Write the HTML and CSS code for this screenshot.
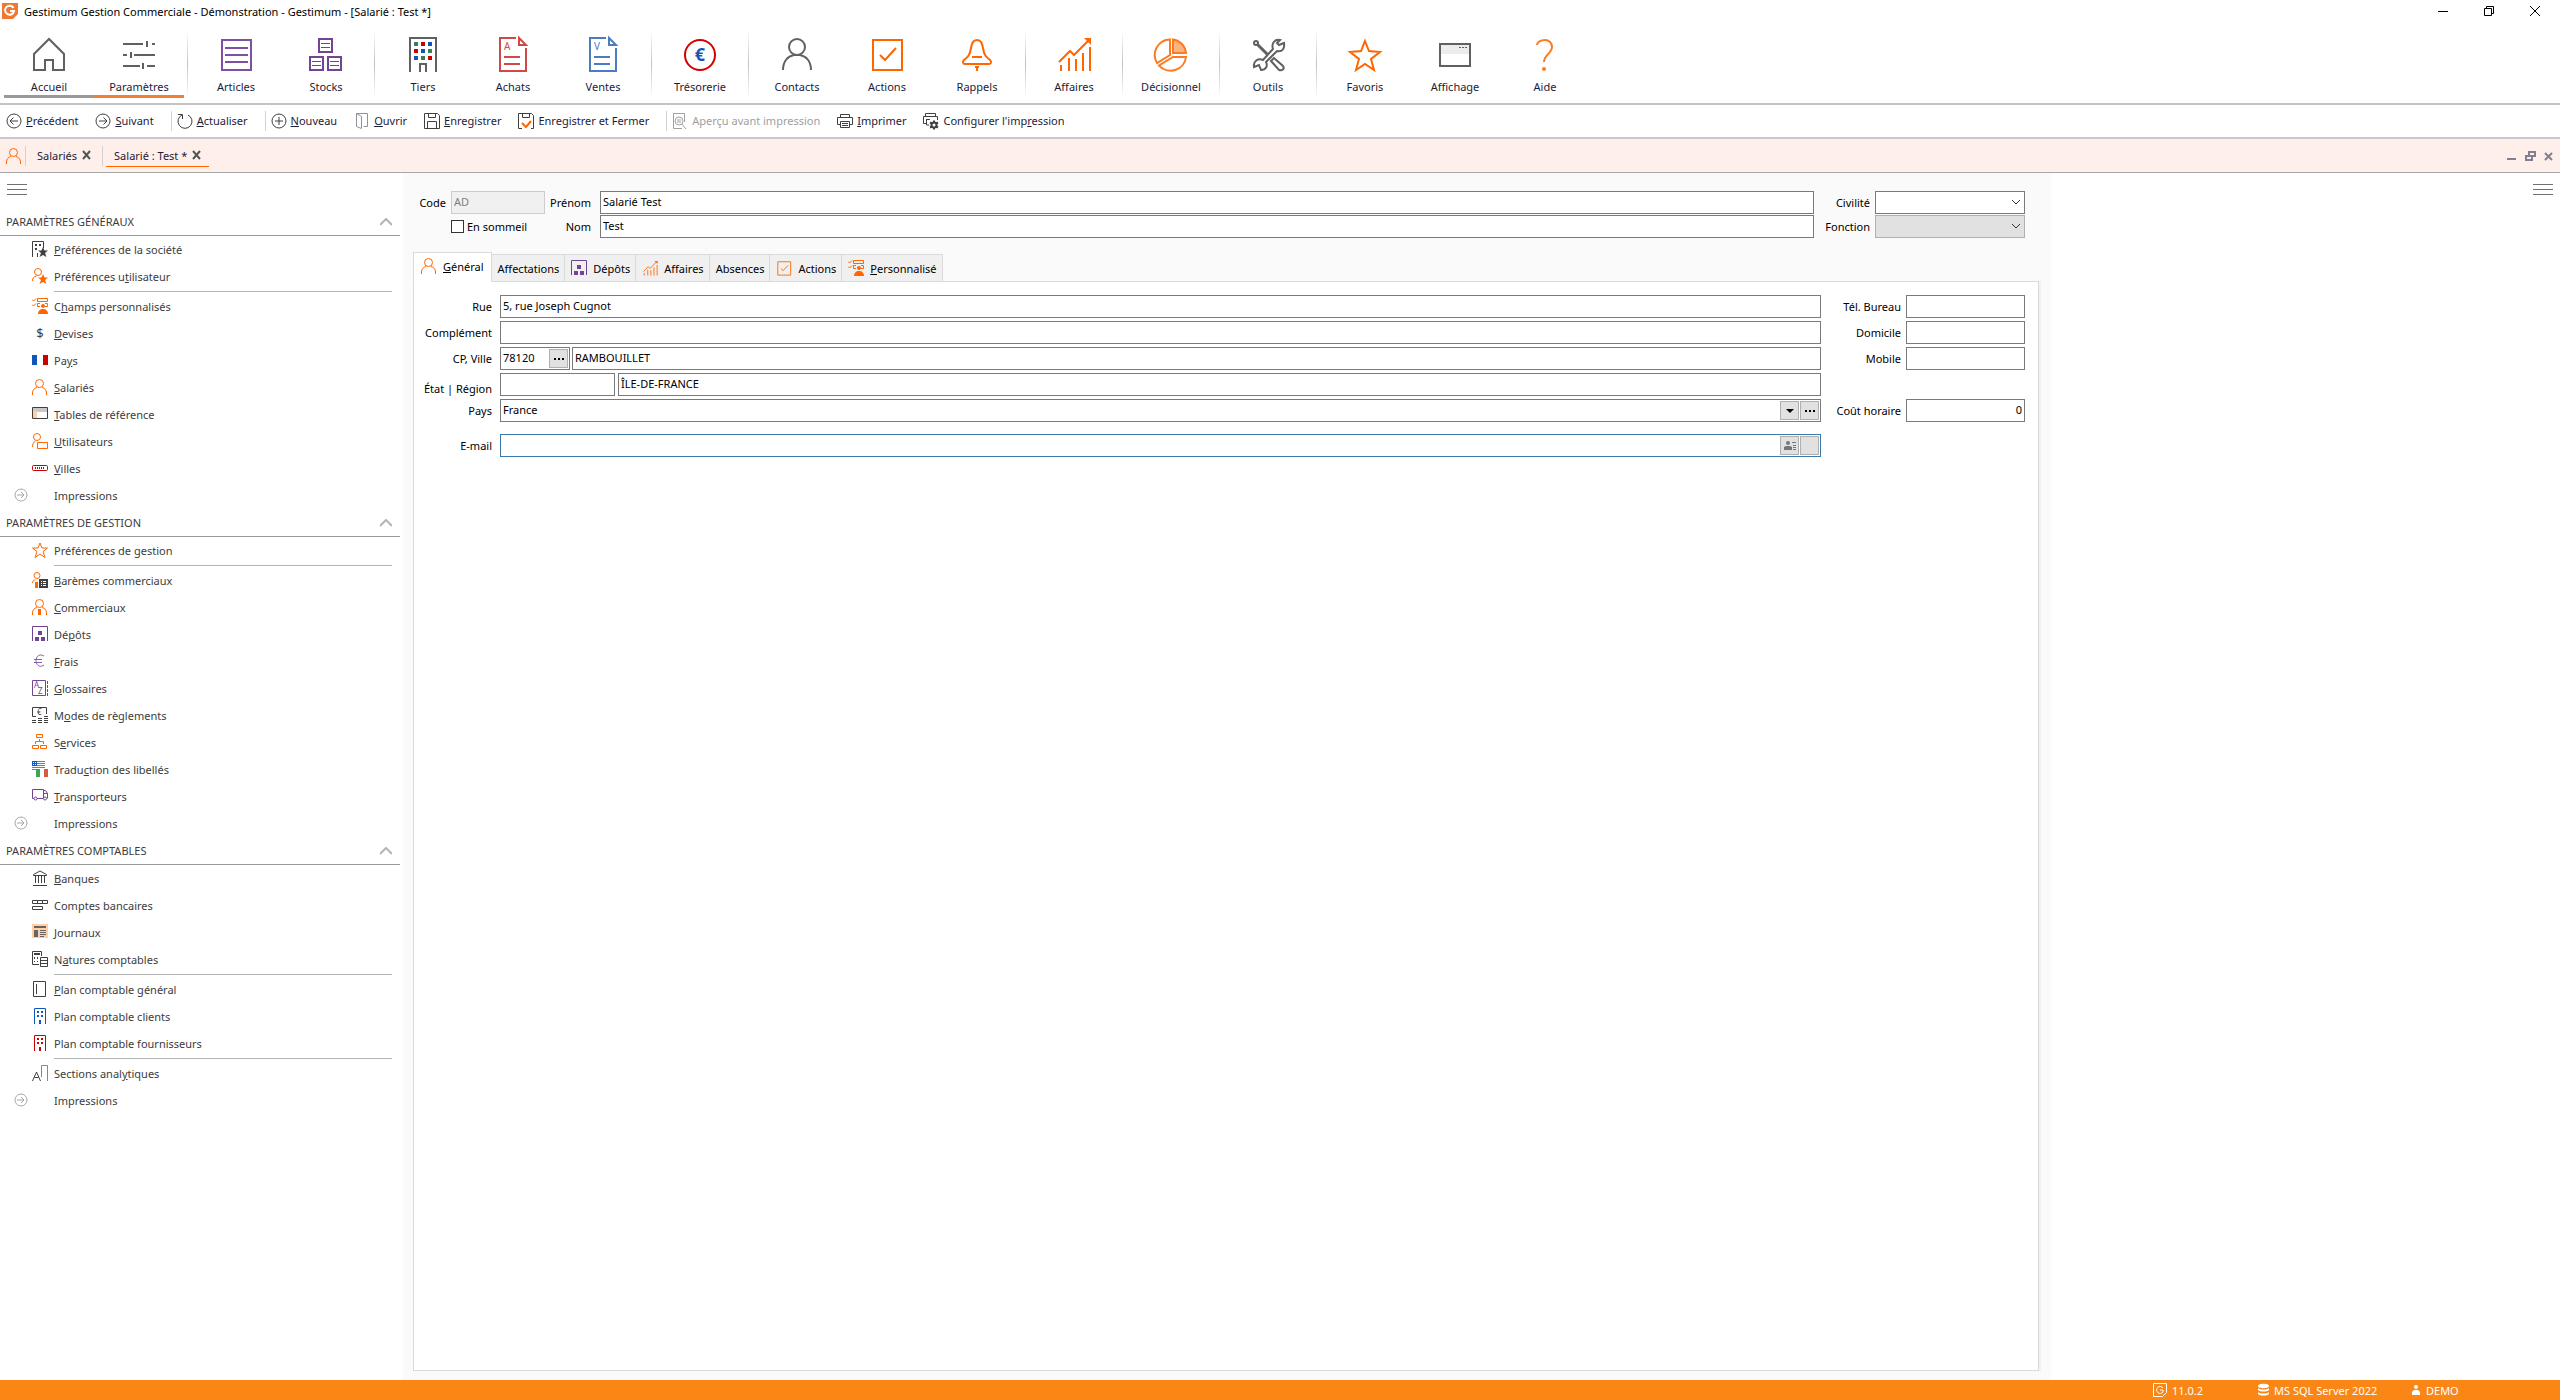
FILE: index.html
```html
<!DOCTYPE html>
<html lang="fr">
<head>
  <meta charset="UTF-8">
  <title>Gestimum Gestion Commerciale - [Salarié : Test *]</title>
  <meta name="viewport" content="width=device-width, initial-scale=1.0">
  <link rel="stylesheet" href="styles.css">
</head>
<body>

  <!-- Icônes réutilisées -->
  <svg class="sprite" aria-hidden="true">
    <symbol id="i-person" viewBox="0 0 16 16">
      <circle cx="7.5" cy="4.5" r="4" fill="none" stroke="#ff6600"/>
      <path d="M.5 16v-2c0-3 2-5 4.500-5.500M14.500 16v-2c0-3-2-5-4.500-5.500" fill="none" stroke="#ff6600"/>
    </symbol>
    <symbol id="i-depot" viewBox="0 0 16 16">
      <path d="M.5 15V.5h15V15" fill="none" stroke="#744494"/>
      <path d="M6 5h4v4H6zM3 11h4v4H3zM9 11h4v4H9z" fill="#744494"/>
    </symbol>
    <symbol id="i-champs" viewBox="0 0 16 16">
      <path d="M0 1.500l1.500 1.500L4 .5M0 6.500L1.500 8 4 5.500M5.500.5h10v3h-10zM8 5.500H5.500v3H8M13 5.500h2.500v3H13" fill="none" stroke="#ff6600"/>
      <circle cx="11" cy="8" r="2" fill="#ff6600"/>
      <path d="M6 16c0-3 2-5 5-5s5 2 5 5z" fill="#ff6600"/>
    </symbol>
    <symbol id="i-affaires" viewBox="0 0 36 36">
      <path d="M5 35v-6M13 35V22M20 35V23M27 35V17M34 35V11M3 26L14 15l4 4L34 3" fill="none" stroke="#ff6600" stroke-width="2"/>
      <path d="M28 2h7v7z" fill="#ff6600"/>
    </symbol>
    <symbol id="i-check" viewBox="0 0 36 36">
      <path d="M4 4h29v30H4zM11 19l5 5 11-12" fill="none" stroke="#ff6600" stroke-width="2"/>
    </symbol>
    <symbol id="i-star" viewBox="0 0 36 36">
      <path d="M18 5l4 10 11 1-9 7 3 11-9-6-9 6 3-11-9-7 11-1z" fill="none" stroke="#ff6600" stroke-width="2"/>
    </symbol>
    <symbol id="i-go" viewBox="0 0 14 14">
      <circle cx="7" cy="7" r="6" fill="none" stroke="#a8a8a8"/>
      <path d="M3 7h7M7 4l3 3-3 3" fill="none" stroke="#a8a8a8"/>
    </symbol>
    <symbol id="i-tower" viewBox="0 0 16 16">
      <path d="M2.500 16V.5h11V16" fill="none" stroke="currentColor"/>
      <path d="M5 3h2v2H5zM9 3h2v2H9zM5 7h2v2H5zM9 7h2v2H9zM7 12h2v4H7z" fill="currentColor"/>
    </symbol>
    <symbol id="i-chevron" viewBox="0 0 12 8">
      <path d="M0 7l6-6 6 6" fill="none" stroke="#b4b4b4" stroke-width="2"/>
    </symbol>
  </svg>

  <!-- Barre de titre -->
  <header class="titlebar">
    <svg width="16" height="16" viewBox="0 0 16 16"><path d="M0 0h16v11l-5 5H0z" fill="#f07830"/><path d="M11.500 5A4.500 4.500 0 1 0 12 8H8" fill="none" stroke="#fff" stroke-width="2"/></svg>
    <h1>Gestimum Gestion Commerciale - Démonstration - Gestimum - [Salarié : Test *]</h1>
    <div class="window-buttons">
      <button aria-label="Réduire"><svg width="10" height="10"><path d="M0 5.500h10" stroke="#000"/></svg></button>
      <button aria-label="Restaurer"><svg width="10" height="10"><path d="M.5 2.500h7v7h-7zM2.500 2.500v-2h7v7h-2" fill="none" stroke="#000"/></svg></button>
      <button aria-label="Fermer"><svg width="10" height="10"><path d="M0 0l10 10M10 0L0 10" stroke="#000"/></svg></button>
    </div>
  </header>

  <!-- Ruban principal -->
  <nav class="ribbon">
    <button class="module open">
      <svg viewBox="0 0 36 36"><path d="M3 34V18L18 3l15 15v16H22V24h-8v10z" fill="none" stroke="#606060" stroke-width="2"/></svg>
      Accueil
    </button>
    <button class="module active">
      <svg viewBox="0 0 36 36"><path d="M2 8h20M31 8h3M26 5v6M2 19h4M13 19h21M10 16v6M2 30h17M26 30h8M22 27v6" stroke="#606060" stroke-width="2"/></svg>
      Paramètres
    </button>
    <span class="divider"></span>
    <button class="module">
      <svg viewBox="0 0 36 36"><path d="M4 4h29v30H4zM7 12h23M7 19h23M7 26h23" fill="none" stroke="#7f4fa3" stroke-width="2"/></svg>
      Articles
    </button>
    <button class="module">
      <svg viewBox="0 0 36 36"><path d="M11 3h13v13H11zM2 21h13v13H2zM20 21h13v13H20z" fill="none" stroke="#744494" stroke-width="2"/><path d="M13 7.500h9M13 11.500h9M4 25.500h9M4 29.500h9M22 25.500h9M22 29.500h9" stroke="#744494"/></svg>
      Stocks
    </button>
    <span class="divider"></span>
    <button class="module">
      <svg viewBox="0 0 36 36"><path d="M5 36V2h26v34M15 36v-8h6v8" fill="none" stroke="#606060" stroke-width="2"/><path d="M9 6h4v4H9zM23 13h4v4h-4zM16 20h4v4h-4z" fill="#3a8050"/><path d="M16 6h4v4h-4zM9 13h4v4H9zM23 20h4v4h-4z" fill="#cc0000"/><path d="M23 6h4v4h-4zM16 13h4v4h-4zM9 20h4v4H9z" fill="#0f56b8"/></svg>
      Tiers
    </button>
    <button class="module">
      <svg viewBox="0 0 36 36"><path d="M21 2H5v33h26V12M9 21h16M9 28h16" fill="none" stroke="#d04848" stroke-width="2"/><path d="M24 2v7h7z" fill="none" stroke="#d04848" stroke-width="2"/><text x="9" y="14" fill="#d04848" font-size="10">A</text></svg>
      Achats
    </button>
    <button class="module">
      <svg viewBox="0 0 36 36"><path d="M21 2H5v33h26V12M9 21h16M9 28h16" fill="none" stroke="#4a7cbe" stroke-width="2"/><path d="M24 2v7h7z" fill="none" stroke="#4a7cbe" stroke-width="2"/><text x="9" y="14" fill="#4a7cbe" font-size="10">V</text></svg>
      Ventes
    </button>
    <span class="divider"></span>
    <button class="module">
      <svg viewBox="0 0 36 36"><circle cx="18" cy="19" r="15" fill="none" stroke="#d40000" stroke-width="2"/><text x="18" y="25" text-anchor="middle" fill="#1458b4" font-size="18" font-weight="bold">€</text></svg>
      Trésorerie
    </button>
    <span class="divider"></span>
    <button class="module">
      <svg viewBox="0 0 36 36"><circle cx="18" cy="11" r="8" fill="none" stroke="#606060" stroke-width="2"/><path d="M4 34c0-9 5-14 11-15h6c6 1 11 6 11 15" fill="none" stroke="#606060" stroke-width="2"/></svg>
      Contacts
    </button>
    <button class="module">
      <svg><use href="#i-check"/></svg>
      Actions
    </button>
    <button class="module">
      <svg viewBox="0 0 36 36"><path d="M18 4c-4 0-5 3-6 8-1 7-3 9-7 12-2 2-1 4 1 4h24c2 0 3-2 1-4-4-3-6-5-7-12-1-5-2-8-6-8z" fill="none" stroke="#ff6600" stroke-width="2"/><path d="M13 21h10M16 31h4M18 30v5" stroke="#ff6600" stroke-width="2"/></svg>
      Rappels
    </button>
    <span class="divider"></span>
    <button class="module">
      <svg><use href="#i-affaires"/></svg>
      Affaires
    </button>
    <span class="divider"></span>
    <button class="module">
      <svg viewBox="0 0 36 36"><path d="M17 3.500A15.500 15.500 0 0 0 4 27l13-8z" fill="none" stroke="#ff7a1f" stroke-width="2"/><path d="M20 3.500A15 15 0 0 1 33 17H20z" fill="#f9b583" stroke="#ff7a1f" stroke-width="2"/><path d="M33 21A15.500 15.500 0 0 1 6 29.500L20 21z" fill="none" stroke="#ff7a1f" stroke-width="2"/></svg>
      Décisionnel
    </button>
    <span class="divider"></span>
    <button class="module">
      <svg viewBox="0 0 36 36"><path d="M7 8l11 11" stroke="#606060" stroke-width="3"/><circle cx="6" cy="7" r="2" fill="#fff" stroke="#606060" stroke-width="2"/><path d="M21 25l3-3 9 8c2 3-1 5-4 4z" fill="#fff" stroke="#606060" stroke-width="2"/><path d="M30 4c-5-1-9 3-7 9L13 24c-5-2-10 1-9 7l5-2 2 5c5 0 7-4 5-8l11-11c5 1 8-2 7-8l-5 2-2-2z" fill="#fff" stroke="#606060" stroke-width="2"/></svg>
      Outils
    </button>
    <span class="divider"></span>
    <button class="module">
      <svg><use href="#i-star"/></svg>
      Favoris
    </button>
    <button class="module">
      <svg viewBox="0 0 36 36"><path d="M3 8h30v10H3z" fill="#ececec"/><path d="M3 8h30v22H3z" fill="none" stroke="#606060" stroke-width="2"/><path d="M22 11.500h9" stroke="#606060" stroke-dasharray="2 1"/></svg>
      Affichage
    </button>
    <button class="module">
      <svg viewBox="0 0 36 36"><path d="M10 9c0-3 4-5 8-5s7 3 7 7c0 6-8 8-8 15" fill="none" stroke="#ff7a1f" stroke-width="2"/><circle cx="17" cy="33" r="2" fill="#ff7a1f"/></svg>
      Aide
    </button>
  </nav>

  <!-- Barre d'outils -->
  <div class="toolbar">
    <button><svg viewBox="0 0 16 16"><circle cx="8" cy="8" r="7" fill="none" stroke="#404040"/><path d="M12 8H4M7.500 4.500L4 8l3.500 3.500" fill="none" stroke="#404040"/></svg><span><u>P</u>récédent</span></button>
    <button><svg viewBox="0 0 16 16"><circle cx="8" cy="8" r="7" fill="none" stroke="#404040"/><path d="M4 8h8M8.500 4.500L12 8l-3.500 3.500" fill="none" stroke="#404040"/></svg><span><u>S</u>uivant</span></button>
    <span class="bar"></span>
    <button><svg viewBox="0 0 16 16"><path d="M11 2a7 7 0 1 1-6 0M1 1.500h4.500V6" fill="none" stroke="#404040"/></svg><span><u>A</u>ctualiser</span></button>
    <span class="bar"></span>
    <button><svg viewBox="0 0 16 16"><circle cx="8" cy="8" r="7" fill="none" stroke="#404040"/><path d="M4 8h8M8 4v8" stroke="#404040"/></svg><span><u>N</u>ouveau</span></button>
    <button><svg viewBox="0 0 16 16"><path d="M2.500 13.500V.5h11v13h-4M2.500.5l5 3v12l-5-2" fill="none" stroke="#9090a0"/></svg><span><u>O</u>uvrir</span></button>
    <button><svg viewBox="0 0 16 16"><path d="M.5.5h13l2 2v13H.5zM4.500.5v4h7v-4M3.500 15.500v-7h9v7" fill="none" stroke="#404040"/></svg><span><u>E</u>nregistrer</span></button>
    <button><svg viewBox="0 0 16 16"><path d="M4 15.500H.5V.5h13l2 2v13H13M4.500.5v4h7v-4" fill="none" stroke="#404040"/><path d="M4 10l4 4 5-6" fill="none" stroke="#ff6600" stroke-width="2"/></svg><span>Enregistrer et Fermer</span></button>
    <span class="bar"></span>
    <button disabled><svg viewBox="0 0 16 16"><path d="M10 15.500H1.500V.5h11V9" fill="none" stroke="#a0a0a0"/><circle cx="7" cy="8" r="4" fill="none" stroke="#a0a0a0"/><path d="M5 7h4M5 9h4M10 11l4 5" stroke="#a0a0a0"/></svg><span>Aperçu avant impression</span></button>
    <button><svg viewBox="0 0 16 16"><path d="M3.500 4V1.500h9V4M3 11.500H.5v-7h15v7H13M3.500 8.500h9v6h-9zM5 10.500h6M5 12.500h6" fill="none" stroke="#404040"/></svg><span><u>I</u>mprimer</span></button>
    <button><svg viewBox="0 0 16 16"><path d="M2.500 3V.5h10V3M3 10.500H.5v-7h14V7M3.500 6.500H7M3.500 6v6H6" fill="none" stroke="#404040"/><circle cx="11" cy="12" r="2.500" fill="none" stroke="#404040" stroke-width="2"/><path d="M11 7.500v2M11 14.500v2M7 9.500l2 1M13 13.500l2 1M15 9.500l-2 1M9 13.500l-2 1" stroke="#404040" stroke-width="2"/></svg><span>Configurer l'imp<u>r</u>ession</span></button>
  </div>

  <!-- Onglets des fenêtres ouvertes -->
  <div class="windows">
    <svg class="icon" width="16" height="16"><use href="#i-person"/></svg>
    <span class="bar"></span>
    <a href="#" class="win">Salariés <svg width="7" height="8"><path d="M0 0l7 8M7 0L0 8" stroke="#555" stroke-width="2"/></svg></a>
    <span class="bar"></span>
    <a href="#" class="win current">Salarié : Test * <svg width="7" height="8"><path d="M0 0l7 8M7 0L0 8" stroke="#555" stroke-width="2"/></svg></a>
    <div class="mdi-buttons">
      <button aria-label="Réduire la fiche"><svg width="10" height="10"><path d="M0 8h9" stroke="#808090" stroke-width="2"/></svg></button>
      <button aria-label="Restaurer la fiche"><svg width="11" height="10"><path d="M1 5h6v4H1zM4 4V1h6v4H8" fill="none" stroke="#808090" stroke-width="2"/></svg></button>
      <button aria-label="Fermer la fiche"><svg width="9" height="10"><path d="M1 2l7 7M8 2L1 9" stroke="#808090" stroke-width="2"/></svg></button>
    </div>
  </div>

  <div class="workspace">

    <!-- Menu latéral -->
    <aside class="sidebar">
      <button class="burger" aria-label="Menu"><svg width="20" height="11"><path d="M0 .5h20M0 5.500h20M0 10.500h20" stroke="#707070"/></svg></button>

      <h2>PARAMÈTRES GÉNÉRAUX <svg width="12" height="8"><use href="#i-chevron"/></svg></h2>
      <ul>
        <li><a href="#"><svg viewBox="0 0 16 16"><path d="M.5 16V.5h11V7M5.500 16v-4" fill="none" stroke="#404040"/><path d="M3 3h2v2H3zM7 3h2v2H7zM3 7h2v2H3z" fill="#404040"/><path d="M11 6l1.500 3.500H16l-3 2.500 1.500 4-3.500-2-3.500 2L9 12 6 9.500h3.500z" fill="#404040"/></svg><span><u>P</u>références de la société</span></a></li>
        <li class="split"><a href="#"><svg viewBox="0 0 16 16"><circle cx="6" cy="4" r="3.500" fill="none" stroke="#ff6600"/><path d="M.5 13c0-3 1-4 4-5" fill="none" stroke="#ff6600"/><path d="M11 6l1.500 3.500H16l-3 2.500 1.500 4-3.500-2-3.500 2L9 12 6 9.500h3.500z" fill="#ff6600"/></svg><span>Préférences u<u>t</u>ilisateur</span></a></li>
        <li><a href="#"><svg><use href="#i-champs"/></svg><span>C<u>h</u>amps personnalisés</span></a></li>
        <li><a href="#"><svg viewBox="0 0 16 16"><text x="8" y="13" text-anchor="middle" fill="#404040" font-size="13">$</text></svg><span><u>D</u>evises</span></a></li>
        <li><a href="#"><svg viewBox="0 0 16 16"><path d="M0 3h5v10H0z" fill="#0f56b8"/><path d="M11 3h5v10h-5z" fill="#cc0000"/></svg><span>Pa<u>y</u>s</span></a></li>
        <li><a href="#"><svg><use href="#i-person"/></svg><span><u>S</u>alariés</span></a></li>
        <li><a href="#"><svg viewBox="0 0 16 16"><path d="M1 2h14v4H1z" fill="#c8c8c8"/><path d="M1 5h4v8H1z" fill="#ffd0a8"/><path d="M.5 1.500h15v11H.5z" fill="none" stroke="#404040"/></svg><span><u>T</u>ables de référence</span></a></li>
        <li><a href="#"><svg viewBox="0 0 16 16"><circle cx="5" cy="4" r="3.500" fill="none" stroke="#ff6600"/><path d="M.5 14c0-3 1-5 3-6M5.500 9.500h10v6h-10z" fill="none" stroke="#ff6600"/></svg><span><u>U</u>tilisateurs</span></a></li>
        <li><a href="#"><svg viewBox="0 0 16 16"><rect x=".5" y="5.500" width="15" height="5" rx="1" fill="none" stroke="#cc0000"/><path d="M3 8h10" stroke="#404040" stroke-width="2" stroke-dasharray="1 1"/></svg><span><u>V</u>illes</span></a></li>
        <li class="print"><a href="#"><svg><use href="#i-go"/></svg><span>Impressions</span></a></li>
      </ul>

      <h2>PARAMÈTRES DE GESTION <svg width="12" height="8"><use href="#i-chevron"/></svg></h2>
      <ul>
        <li class="split"><a href="#"><svg viewBox="0 0 16 16"><path d="M8 1l2 5h5.500L11 9.500l2 6-5-3.500-5 3.500 2-6L.5 6H6z" fill="none" stroke="#ff6600"/></svg><span>Préférences de <u>g</u>estion</span></a></li>
        <li><a href="#"><svg viewBox="0 0 16 16"><circle cx="5" cy="3.500" r="3" fill="none" stroke="#ff6600"/><path d="M.5 11c0-2 1-3 3-3" fill="none" stroke="#ff6600"/><path d="M3 10h3v6H3z" fill="#ff6600"/><path d="M7 7h9v9H7z" fill="#404040"/><path d="M9 9.500h1M11 9.500h3M9 11.500h1M11 11.500h3M9 13.500h1M11 13.500h3" stroke="#fff"/></svg><span><u>B</u>arèmes commerciaux</span></a></li>
        <li><a href="#"><svg viewBox="0 0 16 16"><use href="#i-person"/><path d="M6 10h3v6H6z" fill="#ff6600"/></svg><span><u>C</u>ommerciaux</span></a></li>
        <li><a href="#"><svg><use href="#i-depot"/></svg><span>Dé<u>p</u>ôts</span></a></li>
        <li><a href="#"><svg viewBox="0 0 16 16"><path d="M12 3C7 0 4 4 4 7.500s3 8 8 4.500M2 6.500h8M2 9.500h8" fill="none" stroke="#8a5cad"/></svg><span><u>F</u>rais</span></a></li>
        <li><a href="#"><svg viewBox="0 0 16 16"><path d="M.5.5h13v15H.5z" fill="none" stroke="#744494"/><path d="M15.500 1v15" stroke="#744494" stroke-dasharray="3 1"/><text x="2" y="8" font-size="8" fill="#744494">A</text><text x="6" y="14" font-size="8" fill="#744494">Z</text></svg><span><u>G</u>lossaires</span></a></li>
        <li><a href="#"><svg viewBox="0 0 16 16"><path d="M4 9.500H.5v-9h14V7" fill="none" stroke="#404040"/><path d="M6 11.500h4M12 9.500h4M6 13.500h4M12 11.500h4M0 13.500h4M12 13.500h4M0 15.500h4M6 15.500h4M12 15.500h4" stroke="#404040"/><text x="5" y="8" font-size="8" fill="#404040">€</text></svg><span>M<u>o</u>des de règlements</span></a></li>
        <li><a href="#"><svg viewBox="0 0 16 16"><path d="M4.500.5h6v3h-6zM.5 11.500h6v3h-6zM8.500 11.500h6v3h-6zM7.500 5v2M3.500 10V7.500h8V10" fill="none" stroke="#ff6600"/></svg><span>S<u>e</u>rvices</span></a></li>
        <li><a href="#"><svg viewBox="0 0 16 16"><path d="M5 .5h8M5 2.500h8M5 4.500h8M0 6.500h13M0 8.500h4" stroke="#d85a3c"/><path d="M0 0h5v5H0z" fill="#0f56b8"/><path d="M1 1.500h1M3 1.500h1M1 3.500h1M3 3.500h1" stroke="#fff"/><path d="M4 8h4v8H4z" fill="#3aa655"/><path d="M8 8h4v8H8z" fill="#fff"/><path d="M12 8h4v8h-4z" fill="#d85a3c"/></svg><span>Tradu<u>c</u>tion des libellés</span></a></li>
        <li><a href="#"><svg viewBox="0 0 16 16"><path d="M2 10.500H.5v-9h11v9H5M11.500 2.500h2l2 3v5M11.500 5.500h4" fill="none" stroke="#744494"/><circle cx="3.500" cy="10.500" r="1.500" fill="#fff" stroke="#744494"/><circle cx="13" cy="10.500" r="1.500" fill="#fff" stroke="#744494"/></svg><span><u>T</u>ransporteurs</span></a></li>
        <li class="print"><a href="#"><svg><use href="#i-go"/></svg><span>Impressions</span></a></li>
      </ul>

      <h2>PARAMÈTRES COMPTABLES <svg width="12" height="8"><use href="#i-chevron"/></svg></h2>
      <ul>
        <li><a href="#"><svg viewBox="0 0 16 16"><path d="M1.500 5.500h13v-1L8 1 1.500 4.500zM3.500 6v7M6.500 6v7M9.500 6v7M12.500 6v7M1 15.500h14" fill="none" stroke="#404040"/></svg><span><u>B</u>anques</span></a></li>
        <li><a href="#"><svg viewBox="0 0 16 16"><path d="M.5 3.500h15v3H.5zM5.500 3.500v3M10.500 3.500v3M.5 9.500h10v3H.5z" fill="none" stroke="#404040"/></svg><span>Comptes bancaires</span></a></li>
        <li><a href="#"><svg viewBox="0 0 16 16"><path d="M0 0h16v14H0z" fill="#ffd0a8"/><path d="M2 2h12v2H2zM2 6h4v7H2zM8 6h6v1H8zM8 8h6v1H8zM8 10h6v1H8zM8 12h4v1H8z" fill="#666"/></svg><span><u>J</u>ournaux</span></a></li>
        <li class="split"><a href="#"><svg viewBox="0 0 16 16"><path d="M7 13.500H.5V.5h9V5M8.500 6.500h7v9h-7zM8.500 9.500h7M8.500 12.500h7" fill="none" stroke="#404040"/><path d="M2 2h6v2H2zM2 6h1v2H2zM5 6h1v2H5zM2 10h1v1H2zM5 10h1v1H5z" fill="#404040"/></svg><span>N<u>a</u>tures comptables</span></a></li>
        <li><a href="#"><svg viewBox="0 0 16 16"><path d="M1.500.5h12v15h-12zM4.500 3v10" fill="none" stroke="#404040"/></svg><span><u>P</u>lan comptable général</span></a></li>
        <li><a href="#"><svg class="blue"><use href="#i-tower"/></svg><span>Plan comptable clients</span></a></li>
        <li class="split"><a href="#"><svg class="red"><use href="#i-tower"/></svg><span>Plan comptable fournisseurs</span></a></li>
        <li><a href="#"><svg viewBox="0 0 16 16"><path d="M.5 16l4-9 4 9M2.500 12.500h4" fill="none" stroke="#404040"/><path d="M9.500 12V.5h6V16" fill="none" stroke="#ff6600"/></svg><span>Sections anal<u>y</u>tiques</span></a></li>
        <li class="print"><a href="#"><svg><use href="#i-go"/></svg><span>Impressions</span></a></li>
      </ul>
    </aside>

    <!-- Fiche salarié -->
    <main class="record">
      <form class="identity">
        <label for="code">Code</label>
        <input type="text" id="code" value="AD" disabled>
        <label for="prenom">Prénom</label>
        <input type="text" id="prenom" value="Salarié Test">
        <label for="civilite">Civilité</label>
        <div class="select"><select id="civilite"></select><svg width="8" height="5"><path d="M0 0l4 4 4-4" fill="none" stroke="#333"/></svg></div>

        <label class="sleep"><input type="checkbox"> En sommeil</label>
        <label for="nom">Nom</label>
        <input type="text" id="nom" value="Test">
        <label for="fonction">Fonction</label>
        <div class="select"><select id="fonction" disabled></select><svg width="8" height="5"><path d="M0 0l4 4 4-4" fill="none" stroke="#333"/></svg></div>
      </form>

      <div class="tabs">
        <button class="tab selected"><svg><use href="#i-person"/></svg><span><u>G</u>énéral</span></button>
        <button class="tab">Affectations</button>
        <button class="tab"><svg><use href="#i-depot"/></svg>Dépôts</button>
        <button class="tab"><svg><use href="#i-affaires"/></svg>Affaires</button>
        <button class="tab">Absences</button>
        <button class="tab"><svg><use href="#i-check"/></svg>Actions</button>
        <button class="tab"><svg><use href="#i-champs"/></svg><span><u>P</u>ersonnalisé</span></button>
      </div>

      <form class="panel">
        <div class="address">
          <label for="rue">Rue</label>
          <input type="text" id="rue" value="5, rue Joseph Cugnot">

          <label for="complement">Complément</label>
          <input type="text" id="complement">

          <label for="cp">CP, Ville</label>
          <div class="pair zip">
            <div class="field">
              <input type="text" id="cp" value="78120">
              <button type="button" aria-label="Choisir le code postal"><svg width="10" height="2"><path d="M0 0h2v2H0zM4 0h2v2H4zM8 0h2v2H8z"/></svg></button>
            </div>
            <input type="text" aria-label="Ville" value="RAMBOUILLET">
          </div>

          <label for="etat" class="low">État | Région</label>
          <div class="pair state">
            <input type="text" id="etat">
            <input type="text" aria-label="Région" value="ÎLE-DE-FRANCE">
          </div>

          <label for="pays">Pays</label>
          <div class="field">
            <input type="text" id="pays" value="France">
            <button type="button" aria-label="Dérouler"><svg width="8" height="4"><path d="M0 0h8L4 4z"/></svg></button>
            <button type="button" aria-label="Choisir le pays"><svg width="10" height="2"><path d="M0 0h2v2H0zM4 0h2v2H4zM8 0h2v2H8z"/></svg></button>
          </div>

          <label for="email" class="apart">E-mail</label>
          <div class="field focus apart">
            <input type="email" id="email">
            <button type="button" aria-label="Carte de contact"><svg width="12" height="10"><circle cx="4" cy="2" r="2" fill="#777"/><path d="M0 9V6l2-1h4l2 1v3zM8 1h4v1H8zM9 4h3v1H9zM9 6h3v1H9zM9 8h3v1H9z" fill="#777"/></svg></button>
            <button type="button" aria-label="Envoyer"></button>
          </div>
        </div>

        <div class="phones">
          <label for="bureau">Tél. Bureau</label>
          <input type="text" id="bureau">
          <label for="domicile">Domicile</label>
          <input type="text" id="domicile">
          <label for="mobile">Mobile</label>
          <input type="text" id="mobile">
          <label for="cout" class="cost">Coût horaire</label>
          <input type="text" id="cout" class="cost" value="0">
        </div>
      </form>
    </main>

    <aside class="right-pane">
      <button class="burger" aria-label="Volet droit"><svg width="20" height="11"><path d="M0 .5h20M0 5.500h20M0 10.500h20" stroke="#707070"/></svg></button>
    </aside>
  </div>

  <!-- Barre d'état -->
  <footer class="statusbar">
    <div><svg width="14" height="14"><path d="M.5.5h13v9l-4 4h-9zM10 5a3.500 3.500 0 1 0 0 4V7H7" fill="none" stroke="#fff"/></svg>11.0.2</div>
    <div><svg width="11" height="12"><path d="M0 2c0-3 11-3 11 0S0 5 0 2zM0 4c2 2 9 2 11 0v2c-2 2-9 2-11 0zM0 8c2 2 9 2 11 0v2c-2 2-9 2-11 0z" fill="#fff"/></svg>MS SQL Server 2022</div>
    <div><svg width="9" height="10"><circle cx="4" cy="2" r="2" fill="#fff"/><path d="M0 10V7l2-2h4l2 2v3z" fill="#fff"/></svg>DEMO</div>
  </footer>

</body>
</html>
```
FILE: styles.css
```css
* {
  box-sizing: border-box;
}

body {
  margin: 0;
  min-height: 100vh;
  display: flex;
  flex-direction: column;
  background: #fff;
  color: #000;
  font: 11px/15px "Noto Sans", "Open Sans", sans-serif;
}

button,
input,
select {
  font: inherit;
  color: inherit;
}

button {
  border: 0;
  padding: 0;
  background: none;
}

a {
  color: inherit;
  text-decoration: none;
}

svg {
  flex: none;
  display: block;
  overflow: visible;
}

.sprite {
  position: absolute;
  width: 0;
  height: 0;
}

/* Barre de titre */
.titlebar {
  display: flex;
  align-items: center;
  gap: 6px;
  height: 22px;
  padding: 0 20px 0 2px;
}
.titlebar h1 {
  margin: 0;
  font-size: 11px;
  font-weight: normal;
}
.window-buttons {
  display: flex;
  gap: 36px;
  margin-left: auto;
}

/* Ruban */
.ribbon {
  display: flex;
  height: 83px;
  padding: 8px 4px 4px;
  border-bottom: 2px solid #c4c4c8;
}
.module {
  display: flex;
  flex-direction: column;
  align-items: center;
  gap: 6px;
  width: 90px;
  height: 68px;
  padding-top: 6px;
  line-height: 18px;
  color: #1c1c38;
}
.module svg {
  width: 36px;
  height: 36px;
}
.module.open {
  box-shadow: inset 0 -3px #999;
}
.module.active {
  box-shadow: inset 0 -3px #f08033;
}
.divider {
  width: 1px;
  height: 68px;
  margin: 0 3px;
  background: linear-gradient(#fff, #c0c0c8 50%, #fff);
}

/* Barre d'outils */
.toolbar {
  display: flex;
  align-items: center;
  height: 34px;
  padding: 0 6px;
  border-bottom: 2px solid #c8c8cc;
}
.toolbar button {
  display: flex;
  align-items: center;
  gap: 4px;
  height: 16px;
  margin-right: 17px;
  color: #1c1c38;
}
.toolbar button span {
  padding-bottom: 2px;
}
.toolbar button:disabled {
  color: #a0a0a0;
}
.toolbar svg {
  width: 16px;
  height: 16px;
}
.bar {
  width: 1px;
  height: 20px;
  background: #d4d0d4;
}
.toolbar .bar {
  margin-right: 5px;
}

/* Fenêtres ouvertes */
.windows {
  display: flex;
  align-items: center;
  height: 34px;
  padding: 0 7px 0 6px;
  background: #ffefeb;
  border-bottom: 1px solid #a8a8a8;
}
.windows .icon {
  margin: 1px 3px 0 0;
}
.win {
  display: flex;
  align-items: center;
  gap: 6px;
  height: 23px;
  margin: 0 3px;
  padding: 0 9px 0 8px;
  border-bottom: 1px solid transparent;
  color: #1c1c38;
}
.win.current {
  border-bottom-color: #ff6600;
}
.mdi-buttons {
  display: flex;
  gap: 8px;
  margin-left: auto;
}

.workspace {
  flex: 1;
  display: flex;
}

/* Menu latéral */
.sidebar {
  width: 403px;
  color: #3c3c3c;
}
.burger {
  display: block;
  height: 35px;
  padding-bottom: 2px;
}
.sidebar .burger {
  padding-left: 7px;
}
.sidebar h2 {
  display: flex;
  align-items: center;
  justify-content: space-between;
  height: 28px;
  margin: 0 3px 0 0;
  padding: 0 8px 0 6px;
  border-bottom: 1px solid #999;
  font-size: 11px;
  font-weight: normal;
}
.sidebar ul {
  margin: 0;
  padding: 0 11px 0 32px;
  list-style: none;
}
.sidebar li a {
  display: flex;
  align-items: center;
  gap: 6px;
  height: 27px;
}
.sidebar li svg {
  width: 16px;
  height: 16px;
  margin-bottom: 1px;
}
.sidebar .print {
  margin-left: -18px;
}
.sidebar .print a {
  gap: 26px;
}
.sidebar .print svg {
  width: 14px;
  height: 14px;
}
.split::after {
  content: "";
  display: block;
  height: 1px;
  margin: 1px 0 1px 22px;
  background: #b4b4b4;
}
.blue {
  color: #0f56b8;
}
.red {
  color: #cc0000;
}

/* Fiche */
.record {
  flex: 1;
  display: flex;
  flex-direction: column;
  padding: 18px 12px 9px 10px;
  background: #fafafa;
}
.right-pane {
  display: flex;
  justify-content: flex-end;
  align-items: flex-start;
  width: 509px;
  padding-right: 7px;
}

input[type="text"],
input[type="email"],
select {
  width: 100%;
  min-width: 0;
  height: 23px;
  margin: 0;
  padding: 0 2px 2px;
  border: 1px solid #7a7a7a;
  border-radius: 0;
  background: #fff;
  outline: none;
}
input[type="text"]:disabled {
  border-color: #ccc;
  background: #f0f0f0;
  color: #808080;
}

.identity {
  display: grid;
  grid-template-columns: 33px 94px 41px 1fr 51px 150px;
  align-items: center;
  gap: 1px 5px;
  margin-right: 14px;
}
.identity label {
  text-align: right;
}
.identity #prenom,
.identity #nom {
  width: auto;
  margin-left: 4px;
}
.identity .sleep {
  grid-column: 2;
  display: flex;
  align-items: center;
  gap: 3px;
  text-align: left;
}
.sleep input {
  appearance: none;
  width: 13px;
  height: 13px;
  margin: 0;
  border: 1px solid #333;
  background: #fff;
}
.select {
  position: relative;
}
select {
  display: block;
  appearance: none;
}
select:disabled {
  border-color: #b0b0b0;
  background: #e1e1e1;
  opacity: 1;
}
.select svg {
  position: absolute;
  right: 5px;
  top: 9px;
}

/* Onglets de la fiche */
.tabs {
  display: flex;
  align-items: flex-end;
  height: 30px;
  margin-top: 14px;
}
.tab {
  display: flex;
  align-items: center;
  gap: 6px;
  height: 28px;
  margin-left: -1px;
  padding: 0 5px 0 6px;
  border: 1px solid #dadada;
  background: #f0f0f0;
}
.tab svg {
  width: 16px;
  height: 16px;
}
.tab.selected {
  z-index: 1;
  height: 30px;
  margin: 0;
  padding: 0 7px 2px 7px;
  border-bottom-color: #fff;
  background: #fff;
}

.panel {
  flex: 1;
  display: flex;
  align-items: flex-start;
  margin-top: -1px;
  padding: 13px 13px 13px 5px;
  border: 1px solid #dadada;
  box-shadow: 2px 0 #f0f0f0;
  background: #fff;
}
.address {
  flex: 1;
  display: grid;
  grid-template-columns: 73px 1fr;
  align-items: center;
  gap: 3px 8px;
}
.address label,
.phones label {
  text-align: right;
}
.address .low {
  padding-top: 7px;
}
.address .apart {
  margin-top: 9px;
}
.pair {
  display: grid;
}
.zip {
  grid-template-columns: 70px 1fr;
  gap: 2px;
}
.state {
  grid-template-columns: 115px 1fr;
  gap: 3px;
}
.field {
  display: flex;
  gap: 1px;
  padding-right: 1px;
  border: 1px solid #7a7a7a;
}
.field.focus {
  border-color: #3c78a8;
}
.field input[type="text"],
.field input[type="email"] {
  height: 21px;
  border: 0;
}
.field button {
  display: flex;
  flex: none;
  align-items: center;
  justify-content: center;
  width: 19px;
  height: 19px;
  margin-top: 1px;
  border: 1px solid #b0b0b0;
  background: #e1e1e1;
}
.phones {
  display: grid;
  grid-template-columns: 80px 119px;
  align-items: center;
  gap: 3px 5px;
}
.phones .cost {
  margin-top: 26px;
}
.phones input.cost {
  text-align: right;
}

/* Barre d'état */
.statusbar {
  display: grid;
  grid-template-columns: 105px 154px 148px;
  justify-content: end;
  align-items: center;
  height: 20px;
  background: #fa8616;
  color: #fff;
}
.statusbar div {
  display: flex;
  align-items: center;
  gap: 5px;
}
```
